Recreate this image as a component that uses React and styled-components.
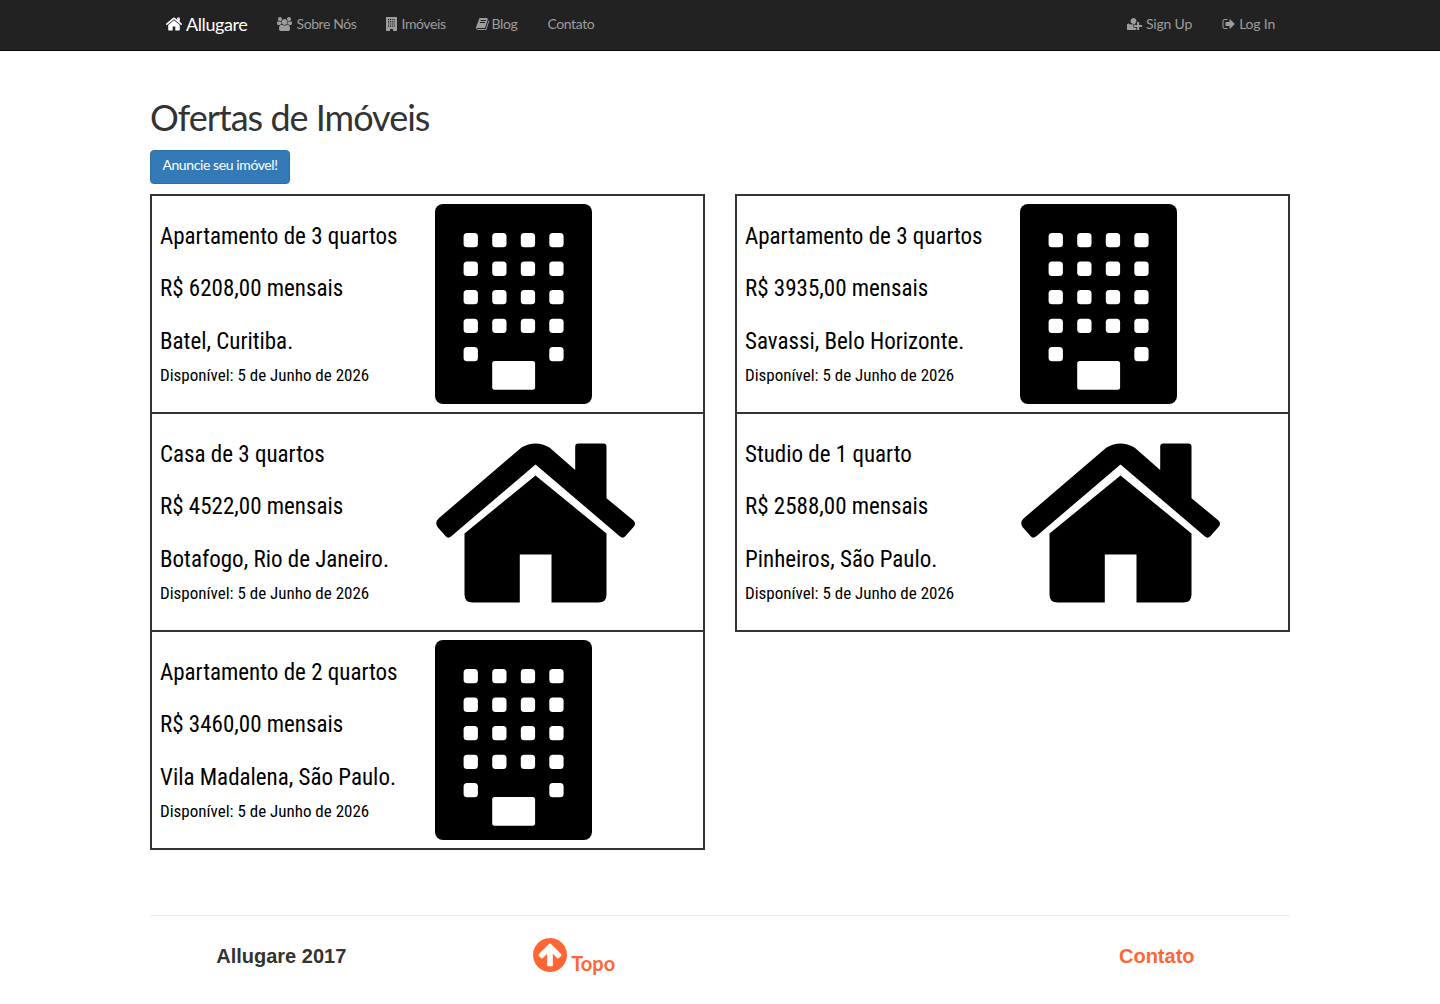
import React from 'react';
import styled, { createGlobalStyle } from 'styled-components';

const Global = createGlobalStyle`
  html, body { margin: 0; padding: 0; background: #fff; }
  body { font-family: Lato, sans-serif; color: #333; }
  * { box-sizing: border-box; }
`;

const NavBar = styled.nav`
  height: 51px;
  background: #222;
  border-bottom: 1px solid #080808;
`;
const NavInner = styled.div`
  width: 1140px;
  margin: 0 auto;
  display: flex;
  justify-content: space-between;
`;
const NavGroup = styled.div`
  display: flex;
`;
const NavLink = styled.a`
  display: flex;
  align-items: center;
  height: 47px;
  padding: 0 15px;
  font-size: 14px;
  font-weight: 400;
  letter-spacing: -0.4px;
  color: #9d9d9d;
  white-space: nowrap;
`;
const AuthLink = styled(NavLink)`
  letter-spacing: -0.2px;
`;
const Brand = styled(NavLink)`
  font-size: 18px;
  font-weight: 400;
  letter-spacing: -0.4px;
  color: #fff;
`;
const Glyph = styled.svg`
  height: ${p => p.$size || 14}px;
  width: ${p => p.$w}px;
  margin-right: ${p => p.$gap ?? 4}px;
  fill: currentColor;
  flex: none;
`;

const Main = styled.main`
  width: 1140px;
  margin: 0 auto;
`;
const Title = styled.h1`
  margin: 0;
  padding-top: 46px;
  height: 99px;
  font-size: 36px;
  line-height: 40px;
  font-weight: 400;
  letter-spacing: -1px;
  color: #333;
`;
const PrimaryButton = styled.a`
  display: block;
  width: 140px;
  height: 34px;
  padding-top: 4px;
  background: #337ab7;
  border: 1px solid #2e6da4;
  border-radius: 4px;
  color: #fff;
  font-size: 14px;
  line-height: 20px;
  letter-spacing: -0.4px;
  text-align: center;
  white-space: nowrap;
`;
const Listings = styled.section`
  display: grid;
  grid-template-columns: 555px 555px;
  column-gap: 30px;
  margin-top: 10px;
  padding-bottom: 2px;
`;
const Card = styled.article`
  display: grid;
  grid-template-columns: 50% 50%;
  height: 220px;
  margin-bottom: -2px;
  border: 2px solid #333;
  color: #000;
`;
const CardText = styled.div`
  padding: 29px 0 0 8px;
  white-space: nowrap;
  font-family: Roboto, sans-serif;
  font-stretch: 75%;
`;
const CardLine = styled.p`
  margin: 0 0 28px;
  font-size: 23px;
  line-height: 24px;
  &:nth-child(2) { margin-bottom: 29px; }
  &:nth-child(3) { margin-bottom: 9px; }
`;
const Available = styled.p`
  margin: 0;
  font-size: 17px;
  line-height: 24px;
`;
const CardArt = styled.div`
  padding: 7.5px 0 0 7.5px;
`;
const ArtSvg = styled.svg`
  display: block;
  height: 200px;
  overflow: visible;
`;

const Footer = styled.footer`
  width: 1140px;
  margin: 65px auto 0;
  border-top: 1px solid #eee;
  display: grid;
  grid-template-columns: 277.5px 292.5px 292.5px 277.5px;
  height: 88px;
`;
const FootBold = styled.div`
  font-family: "Liberation Sans", Arial, sans-serif;
  font-weight: 700;
  font-size: 20px;
  line-height: 22px;
  padding: 29px ${p => p.$accent ? '0' : '15px'} 0 ${p => p.$accent ? '11px' : '0'};
  text-align: center;
  color: ${p => p.$accent ? '#ff6633' : '#333'};
`;
const FootTop = styled.a`
  display: flex;
  justify-content: center;
  padding: 22px 0 0 1px;
  color: #ff6633;
`;
const TopIcon = styled.svg`
  width: 34px;
  height: 34px;
  margin-right: 4px;
  fill: currentColor;
`;
const TopText = styled.span`
  align-self: flex-start;
  margin-top: 12px;
  font-size: 20px;
  line-height: 27px;
  font-weight: 700;
`;

const P = {
  home: "M1472 992v480q0 26-19 45t-45 19h-384v-384h-256v384h-384q-26 0-45-19t-19-45v-480q0-1 .5-3t.5-3l575-474 575 474q1 2 1 6zm223-69l-62 74q-8 9-21 11h-3q-13 0-21-7l-692-577-692 577q-12 8-24 7-13-2-21-11l-62-74q-8-10-7-23.500t11-21.500l719-599q32-26 76-26t76 26l244 204v-195q0-14 9-23t23-9h192q14 0 23 9t9 23v408l219 182q10 8 11 21.500t-7 23.500z",
  users: "M593 896q-162 5-265 128h-134q-82 0-138-40.500t-56-118.500q0-353 124-353 6 0 43.500 21t97.500 42.500 119 21.500q67 0 133-23-5 37-5 66 0 139 81 256zm1071 637q0 120-73 189.500t-194 69.500h-874q-121 0-194-69.500t-73-189.500q0-53 3.500-103.500t14-109 26.500-108.500 43-97.500 62-81 85.500-53.500 111.500-20q10 0 43 21.500t73 48 107 48 135 21.500 135-21.500 107-48 73-48 43-21.500q61 0 111.500 20t85.500 53.500 62 81 43 97.500 26.500 108.500 14 109 3.500 103.500zm-1024-1277q0 106-75 181t-181 75-181-75-75-181 75-181 181-75 181 75 75 181zm704 384q0 159-112.500 271.500t-271.500 112.500-271.500-112.500-112.500-271.500 112.500-271.500 271.500-112.500 271.500 112.500 112.500 271.500zm576 225q0 78-56 118.500t-138 40.500h-134q-103-123-265-128 81-117 81-256 0-29-5-66 66 23 133 23 59 0 119-21.500t97.500-42.500 43.500-21q124 0 124 353zm-128-609q0 106-75 181t-181 75-181-75-75-181 75-181 181-75 181 75 75 181z",
  book: "M1639 478q40 57 18 129l-275 906q-19 64-76.500 107.500t-122.500 43.500h-923q-77 0-148.500-53.500t-99.500-131.500q-24-67-2-127 0-4 3-27t4-37q1-8-3-21.500t-3-19.500q2-11 8-21t16.500-23.500 16.500-23.500q23-38 45-91.500t30-91.500q3-10 .5-30t-.5-28q3-11 17-28t17-23q21-36 42-92t25-90q1-9-2.500-32t.5-28q4-13 22-30.500t22-22.500q19-26 42.500-84.500t27.500-96.500q1-8-3-25.500t-2-26.500q2-8 9-18t18-23 17-21q8-12 16.500-30.500t15-35 16-36 19.500-32 26.500-23.500 36-11.500 47.500 5.500l-1 3q38-9 51-9h761q74 0 114 56t18 130l-274 906q-36 119-71.500 153.500t-128.500 34.500h-869q-27 0-38 15-11 16-1 43 24 70 144 70h923q29 0 56-15.500t35-41.500l300-987q7-22 5-57 38 15 59 43zm-1064 2q-4 13 2 22.500t20 9.500h608q13 0 25.500-9.500t16.500-22.500l21-64q4-13-2-22.500t-20-9.500h-608q-13 0-25.500 9.500t-16.500 22.500zm-83 256q-4 13 2 22.500t20 9.500h608q13 0 25.500-9.500t16.500-22.500l21-64q4-13-2-22.500t-20-9.500h-608q-13 0-25.500 9.500t-16.500 22.500z",
  userPlus: "M832 896q-159 0-271.500-112.500t-112.500-271.500 112.500-271.500 271.500-112.500 271.500 112.500 112.500 271.500-112.500 271.500-271.500 112.500zm720 128h352q13 0 22.500 9.500t9.500 22.500v192q0 13-9.500 22.500t-22.500 9.500h-352v352q0 13-9.500 22.500t-22.500 9.500h-192q-13 0-22.500-9.500t-9.500-22.500v-352h-352q-13 0-22.500-9.500t-9.500-22.500v-192q0-13 9.500-22.500t22.500-9.500h352v-352q0-13 9.500-22.500t22.500-9.500h192q13 0 22.500 9.500t9.500 22.500v352zm-736 224q0 52 38 90t90 38h256v238q-68 50-171 50h-874q-121 0-194-69.500t-73-189.500q0-53 3.500-103.500t14-109 26.500-108.500 43-97.500 62-81 85.500-53.500 111.500-20q19 0 39 17 79 61 154.500 91.500t164.500 30.500 164.500-30.500 154.500-91.500q20-17 39-17 132 0 217 96h-223q-52 0-90 38t-38 90v192z",
  signOut: "M704 1440q0 4 1 20t.5 26.500-3 23.500-10 19.500-20.500 6.500h-320q-119 0-203.500-84.500t-84.500-203.500v-704q0-119 84.500-203.500t203.500-84.500h320q13 0 22.500 9.500t9.500 22.500q0 4 1 20t.5 26.500-3 23.500-10 19.500-20.500 6.500h-320q-66 0-113 47t-47 113v704q0 66 47 113t113 47h312l11.500 1 11.500 3 8 5.500 7 9 2 13.500zm928-544q0 26-19 45l-544 544q-19 19-45 19t-45-19-19-45v-288h-448q-26 0-45-19t-19-45v-384q0-26 19-45t45-19h448v-288q0-26 19-45t45-19 45 19l544 544q19 19 19 45z",
  arrowUp: "M1412 895q0-27-18-45l-362-362-91-91q-18-18-45-18t-45 18l-91 91-362 362q-18 18-18 45t18 45l91 91q18 18 45 18t45-18l189-189v502q0 26 19 45t45 19h128q26 0 45-19t19-45v-502l189 189q19 19 45 19t45-19l91-91q18-18 18-45zm252 1q0 209-103 385.500t-279.500 279.500-385.500 103-385.500-103-279.500-279.500-103-385.500 103-385.500 279.500-279.500 385.500-103 385.500 103 279.500 279.500 103 385.500z",
};

const BuildingGlyph = () => (
  <Glyph viewBox="0 0 11 14" $w={11}>
    <path fillRule="evenodd" d="M.5 0h10a.5.5 0 0 1 .5.5v13a.5.5 0 0 1-.5.5h-3.500v-2h-3v2h-3.500a.5.5 0 0 1-.5-.5v-13a.5.5 0 0 1 .5-.5zM2 2v1.200h1.200V2zm2.100 0v1.200h1.200V2zm2.100 0v1.200h1.200V2zm2.100 0v1.200h.7V2zM2 4.200v1.200h1.200V4.200zm2.100 0v1.200h1.200V4.200zm2.100 0v1.200h1.200V4.200zm2.100 0v1.200h.7V4.200zM2 6.400v1.200h1.200V6.400zm2.100 0v1.200h1.200V6.400zm2.100 0v1.200h1.200V6.400zm2.100 0v1.200h.7V6.400zM2 8.600v1.200h1.200V8.600zm2.100 0v1.200h1.200V8.600zm2.100 0v1.200h1.200V8.600zm2.100 0v1.200h.7V8.600z" />
  </Glyph>
);

const windows = [];
[29, 57.6, 86, 114.7].forEach(y => [28.6, 57.2, 85.8, 114.3].forEach(x => windows.push([x, y])));
windows.push([28.6, 143], [114.3, 143]);

const BuildingArt = () => (
  <ArtSvg viewBox="0 0 157 200" width="157">
    <rect x="0" y="0" width="157" height="200" rx="8" fill="#000" />
    {windows.map(([x, y]) => (
      <rect key={`${x}-${y}`} x={x} y={y} width="14.3" height="14.3" rx="3.5" fill="#fff" />
    ))}
    <rect x="57.2" y="157" width="42.900" height="28.700" rx="2.500" fill="#fff" />
  </ArtSvg>
);

const HouseArt = () => (
  <ArtSvg viewBox="-0.5 -0.5 200 200" width="200">
    <path fill="#000" d="M3 96 L86 25 Q100 17 114 25 L139.700 47.500 V24 Q139.700 21 142.700 21 H168 Q171 21 171 24 V75.700 L198 98 Q201 101 198 104.500 L190 113.500 Q187.300 116.500 184.500 114 L100 42 L15.500 114 Q12.500 116.500 10 113.500 L2 104.500 Q-1 100 3 96Z" />
    <path fill="#000" d="M100 53 L171 111 V172 Q171 180 163 180 H116 V132 H84.300 V180 H37 Q29 180 29 172 V111Z" />
  </ArtSvg>
);

const offers = [
  { kind: 'apt', title: 'Apartamento de 3 quartos', price: 'R$ 6208,00 mensais', place: 'Batel, Curitiba.' },
  { kind: 'apt', title: 'Apartamento de 3 quartos', price: 'R$ 3935,00 mensais', place: 'Savassi, Belo Horizonte.' },
  { kind: 'house', title: 'Casa de 3 quartos', price: 'R$ 4522,00 mensais', place: 'Botafogo, Rio de Janeiro.' },
  { kind: 'house', title: 'Studio de 1 quarto', price: 'R$ 2588,00 mensais', place: 'Pinheiros, São Paulo.' },
  { kind: 'apt', title: 'Apartamento de 2 quartos', price: 'R$ 3460,00 mensais', place: 'Vila Madalena, São Paulo.' },
];

export default function App() {
  return (
    <>
      <Global />
      <NavBar>
        <NavInner>
          <NavGroup>
            <Brand>
              <Glyph viewBox="0 0 1792 1792" $size={18} $w={18} $gap={3}><path d={P.home} /></Glyph>
              Allugare
            </Brand>
            <NavLink>
              <Glyph viewBox="0 0 1920 1792" $w={15}><path d={P.users} /></Glyph>
              Sobre Nós
            </NavLink>
            <NavLink><BuildingGlyph />Imóveis</NavLink>
            <NavLink>
              <Glyph viewBox="0 0 1664 1792" $w={13} $gap={3}><path d={P.book} /></Glyph>
              Blog
            </NavLink>
            <NavLink>Contato</NavLink>
          </NavGroup>
          <NavGroup>
            <AuthLink>
              <Glyph viewBox="0 0 2048 1792" $w={16} $gap={3}><path d={P.userPlus} /></Glyph>
              Sign Up
            </AuthLink>
            <AuthLink>
              <Glyph viewBox="0 0 1664 1792" $w={13} $gap={4}><path d={P.signOut} /></Glyph>
              Log In
            </AuthLink>
          </NavGroup>
        </NavInner>
      </NavBar>
      <Main>
        <Title>Ofertas de Imóveis</Title>
        <PrimaryButton>Anuncie seu imóvel!</PrimaryButton>
        <Listings>
          {offers.map(o => (
            <Card key={o.price}>
              <CardText>
                <CardLine>{o.title}</CardLine>
                <CardLine>{o.price}</CardLine>
                <CardLine>{o.place}</CardLine>
                <Available>Disponível: 5 de Junho de 2026</Available>
              </CardText>
              <CardArt>{o.kind === 'apt' ? <BuildingArt /> : <HouseArt />}</CardArt>
            </Card>
          ))}
        </Listings>
      </Main>
      <Footer>
        <FootBold>Allugare 2017</FootBold>
        <FootTop>
          <TopIcon viewBox="128 128 1536 1536"><path d={P.arrowUp} /></TopIcon>
          <TopText>Topo</TopText>
        </FootTop>
        <div />
        <FootBold $accent>Contato</FootBold>
      </Footer>
    </>
  );
}
